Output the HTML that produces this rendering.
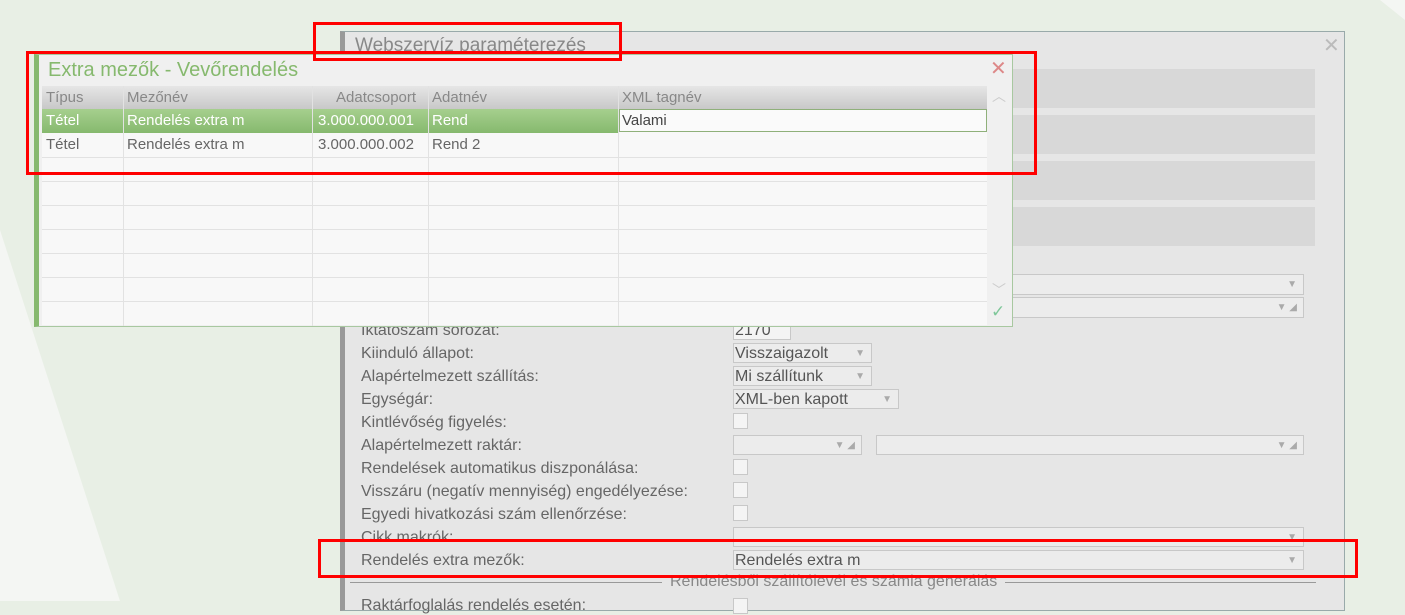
<!DOCTYPE html>
<html><head><meta charset="utf-8"><style>
*{box-sizing:border-box;margin:0;padding:0}
body{width:1405px;height:601px;overflow:hidden;background:#e8efe5;font-family:"Liberation Sans",sans-serif;position:relative}
.abs{position:absolute}
.lbl{position:absolute;left:361px;font-size:16px;color:#666}
.sel{position:absolute;background:#ececec;border:1px solid #c8c8c8;font-size:16px;color:#555;padding-left:1px;line-height:19px}
.sel .a{position:absolute;right:6px;top:0;color:#aaa;font-size:10px}
.cb{position:absolute;left:733px;width:15px;height:16px;background:#f4f4f4;border:1px solid #c8c8c8}
.cell{position:absolute;font-size:15px;color:#666;line-height:24px;white-space:nowrap}
</style></head><body>
<svg class="abs" style="left:0;top:0" width="1405" height="601"><polygon points="0,230 120,601 0,601" fill="#f4f6f3"/><polygon points="1380,0 1405,0 1405,20" fill="#f4f6f3"/></svg>
<div class="abs" style="left:340px;top:31px;width:1005px;height:580px;background:#e6e6e6;border:1px solid #9aa;border-left:5px solid #999"></div>
<div class="abs" style="left:355px;top:35px;font-size:19px;color:#888">Webszervíz paraméterezés</div>
<div class="abs" style="left:1323px;top:33px;font-size:20px;color:#bbb">✕</div>
<div class="abs" style="left:1000px;top:69px;width:315px;height:39px;background:#d8d8d8"></div>
<div class="abs" style="left:1000px;top:115px;width:315px;height:39px;background:#d8d8d8"></div>
<div class="abs" style="left:1000px;top:161px;width:315px;height:39px;background:#d8d8d8"></div>
<div class="abs" style="left:1000px;top:207px;width:315px;height:39px;background:#d8d8d8"></div>
<div class="sel" style="left:1000px;top:274px;width:304px;height:21px"><span class="a">▼</span></div>
<div class="sel" style="left:1000px;top:297px;width:304px;height:21px"><span class="a">▼ ◢</span></div>
<div class="lbl" style="top:322px">Iktatószám sorozat:</div>
<div class="sel" style="left:733px;top:320px;width:58px;height:20px;background:#f4f4f4">2170</div>
<div class="lbl" style="top:345px">Kiinduló állapot:</div>
<div class="sel" style="left:733px;top:343px;width:139px;height:20px">Visszaigazolt<span class="a">▼</span></div>
<div class="lbl" style="top:368px">Alapértelmezett szállítás:</div>
<div class="sel" style="left:733px;top:366px;width:139px;height:20px">Mi szállítunk<span class="a">▼</span></div>
<div class="lbl" style="top:391px">Egységár:</div>
<div class="sel" style="left:733px;top:389px;width:166px;height:20px">XML-ben kapott<span class="a">▼</span></div>
<div class="lbl" style="top:414px">Kintlévőség figyelés:</div>
<div class="cb" style="top:413px"></div>
<div class="lbl" style="top:437px">Alapértelmezett raktár:</div>
<div class="sel" style="left:733px;top:435px;width:129px;height:20px"><span class="a">▼ ◢</span></div>
<div class="sel" style="left:876px;top:435px;width:428px;height:20px"><span class="a">▼ ◢</span></div>
<div class="lbl" style="top:460px">Rendelések automatikus diszponálása:</div>
<div class="cb" style="top:459px"></div>
<div class="lbl" style="top:483px">Visszáru (negatív mennyiség) engedélyezése:</div>
<div class="cb" style="top:482px"></div>
<div class="lbl" style="top:506px">Egyedi hivatkozási szám ellenőrzése:</div>
<div class="cb" style="top:505px"></div>
<div class="lbl" style="top:529px">Cikk makrók:</div>
<div class="sel" style="left:733px;top:527px;width:571px;height:20px"><span class="a">▼</span></div>
<div class="lbl" style="top:552px">Rendelés extra mezők:</div>
<div class="sel" style="left:733px;top:550px;width:571px;height:20px">Rendelés extra m<span class="a">▼</span></div>
<div class="abs" style="left:350px;top:582px;width:966px;height:1px;background:#999"></div>
<div class="abs" style="left:662px;top:573px;padding:0 8px;background:#e6e6e6;font-size:16px;color:#888">Rendelésből szállítólevél és számla generálás</div>
<div class="lbl" style="top:597px">Raktárfoglalás rendelés esetén:</div>
<div class="cb" style="top:598px"></div>
<div class="abs" style="left:34px;top:54px;width:979px;height:273px;background:#f0f0f0;border:1px solid #a8c8a0;border-left:5px solid #86b96e"></div>
<div class="abs" style="left:48px;top:59px;font-size:20px;color:#86b96e">Extra mezők - Vevőrendelés</div>
<div class="abs" style="left:990px;top:56px;font-size:20px;color:#d88">✕</div>
<div class="abs" style="left:42px;top:86px;width:945px;height:23px;background:linear-gradient(#e6e6e6,#c8c8c8)"></div>
<div class="abs" style="left:42px;top:109px;width:945px;height:216px;background:#f8f8f8"></div>
<div class="abs" style="left:42px;top:109px;width:576px;height:24px;background:linear-gradient(#a6cf8e,#86b96e)"></div>
<div class="abs" style="left:619px;top:109px;width:368px;height:23px;background:#fafafa;border:1px solid #8fb07a"></div>
<svg class="abs" style="left:42px;top:86px" width="945" height="240">
<g stroke="#e2e2e2"><line x1="0" x2="945" y1="71.5" y2="71.5"/><line x1="0" x2="945" y1="95.5" y2="95.5"/><line x1="0" x2="945" y1="119.5" y2="119.5"/><line x1="0" x2="945" y1="143.5" y2="143.5"/><line x1="0" x2="945" y1="167.5" y2="167.5"/><line x1="0" x2="945" y1="191.5" y2="191.5"/><line x1="0" x2="945" y1="215.5" y2="215.5"/>
<line x1="81.5" x2="81.5" y1="0" y2="240"/><line x1="270.5" x2="270.5" y1="0" y2="240"/><line x1="386.5" x2="386.5" y1="0" y2="240"/><line x1="576.5" x2="576.5" y1="0" y2="240"/></g></svg>
<div class="cell" style="left:46px;top:86px;line-height:23px;color:#888">Típus</div>
<div class="cell" style="left:127px;top:86px;line-height:23px;color:#888">Mezőnév</div>
<div class="cell" style="left:336px;top:86px;line-height:23px;color:#888">Adatcsoport</div>
<div class="cell" style="left:432px;top:86px;line-height:23px;color:#888">Adatnév</div>
<div class="cell" style="left:622px;top:86px;line-height:23px;color:#888">XML tagnév</div>
<div class="cell" style="left:46px;top:109px;color:#fff">Tétel</div>
<div class="cell" style="left:127px;top:109px;color:#fff">Rendelés extra m</div>
<div class="cell" style="left:318px;top:109px;color:#fff">3.000.000.001</div>
<div class="cell" style="left:432px;top:109px;color:#fff">Rend</div>
<div class="cell" style="left:622px;top:109px;color:#444">Valami</div>
<div class="cell" style="left:46px;top:133px">Tétel</div>
<div class="cell" style="left:127px;top:133px">Rendelés extra m</div>
<div class="cell" style="left:318px;top:133px">3.000.000.002</div>
<div class="cell" style="left:432px;top:133px">Rend 2</div>
<div class="abs" style="left:992px;top:86px;font-size:14px;color:#ccc">︿</div>
<div class="abs" style="left:992px;top:280px;font-size:14px;color:#ccc">﹀</div>
<div class="abs" style="left:991px;top:302px;font-size:17px;color:#7fc79a">✓</div>
<div class="abs" style="left:313px;top:22px;width:309px;height:39px;border:3px solid #f00"></div>
<div class="abs" style="left:26px;top:51px;width:1011px;height:124px;border:3px solid #f00"></div>
<div class="abs" style="left:318px;top:539px;width:1040px;height:39px;border:3px solid #f00"></div>
</body></html>
